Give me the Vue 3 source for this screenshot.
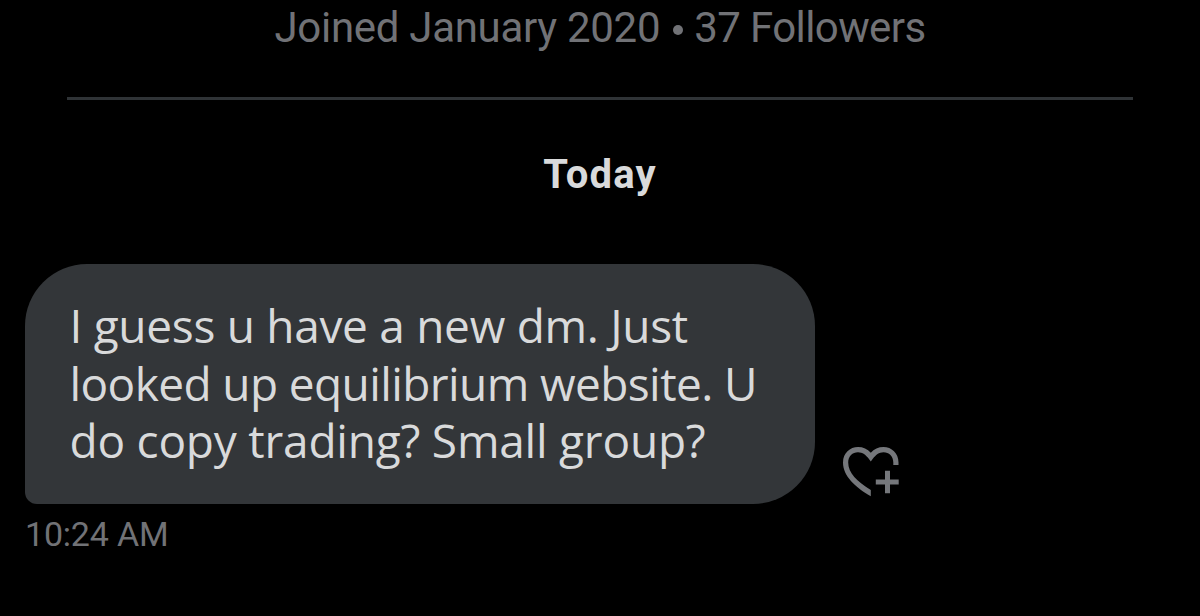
<script setup>
const profile = {
  joined: 'Joined January 2020',
  followers: '37 Followers',
}

const message = {
  lines: ['I guess u have a new dm. Just', 'looked up equilibrium website. U', 'do copy trading? Small group?'],
  time: '10:24 AM',
}
</script>

<template>
  <main class="conversation">
    <header class="profile">
      <span class="joined">{{ profile.joined }}</span>
      <span class="dot"></span>
      <span class="followers">{{ profile.followers }}</span>
    </header>
    <h2 class="day">Today</h2>
    <div class="message-row">
      <div class="bubble">
        <div v-for="(line, i) in message.lines" :key="i" :class="['line', `line-${i + 1}`]">{{ line }}</div>
      </div>
      <button class="react" aria-label="Add reaction">
        <svg width="60" height="54" viewBox="0 0 60 54" fill="#75777b">
          <path d="M28.8 52.3C13 43 1 32 1 18.5C1 9 8 3 16 3C21 3 25.5 5 28.8 8.7C32 5 36.5 3 41.5 3C49.5 3 56.5 9 56.5 18.5V21H51.3V18.5C51.3 12 47 8.2 41.5 8.2C37 8.2 33.5 11 31 14.6L28.8 17.6L26.6 14.6C24 11 20.5 8.2 16 8.2C10.5 8.2 6.2 12 6.2 18.5C6.2 29 15 37.5 28.8 46Z" />
          <path d="M43 26.7H48V35.5H56.7V40.5H48V49.3H43V40.5H33.8V35.5H43Z" />
        </svg>
      </button>
    </div>
    <time class="time">{{ message.time }}</time>
  </main>
</template>

<style>
body {
  background: #000;
}
</style>

<style scoped>
.conversation {
  box-sizing: border-box;
  height: 616px;
  overflow: hidden;
  background: #000;
  color: #d9dadb;
  font-family: Roboto, sans-serif;
}
.profile {
  box-sizing: border-box;
  display: flex;
  justify-content: center;
  height: 100px;
  margin: 0 67px;
  padding-top: 3px;
  border-bottom: 3px solid #2f3336;
  color: #717276;
  font-size: 42px;
  line-height: 50px;
  white-space: nowrap;
}
.joined {
  letter-spacing: -0.3px;
}
.followers {
  letter-spacing: -0.6px;
}
.dot {
  width: 10px;
  height: 10px;
  margin: 22px 11px 0 13px;
  border-radius: 50%;
  background: #717276;
}
.day {
  height: 50px;
  margin: 50px 0 0;
  font-size: 40px;
  line-height: 50px;
  letter-spacing: 1.1px;
  text-align: center;
}
.message-row {
  display: flex;
  align-items: flex-end;
  margin: 64px 0 0 25px;
}
.bubble {
  box-sizing: border-box;
  width: 790px;
  height: 240px;
  padding: 33px 44.5px;
  border-radius: 62px 62px 62px 12px;
  background: #333639;
  font-family: 'Open Sans', sans-serif;
  font-size: 46px;
  font-weight: 430;
  line-height: 57.5px;
  white-space: nowrap;
}
.line {
  height: 57.5px;
}
.line-1 {
  letter-spacing: -0.3px;
}
.line-2 {
  letter-spacing: -0.6px;
}
.line-3 {
  letter-spacing: -0.22px;
}
.react {
  display: flex;
  margin: 0 0 6px 27px;
  padding: 0;
  border: 0;
  background: none;
}
.time {
  display: block;
  margin: 8px 0 0 25px;
  color: #717276;
  font-size: 34px;
  line-height: 44px;
  letter-spacing: -0.2px;
}
</style>
